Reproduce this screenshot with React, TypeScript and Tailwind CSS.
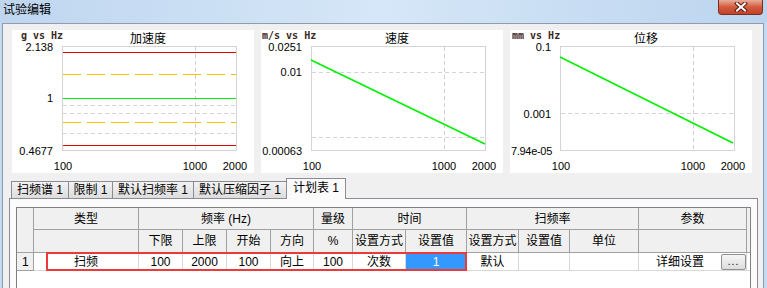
import React from "react";

type HLine = { y: number; color: string; dash?: string };

interface ChartProps {
  unit: string;
  unitX: number;
  title: string;
  yLabels: { t: string; y: number }[];
  lines: HLine[];
  slope?: [number, number, number, number];
}

function Chart({ unit, unitX, title, yLabels, lines, slope }: ChartProps) {
  return (
    <div className="w-[242px] h-[143px] bg-white">
      <svg width="242" height="143" className="block">
        <text x={unitX} y={9} fontFamily="DejaVu Sans Mono" fontWeight="bold" fontSize="10" fill="#3b2a1e">
          {unit}
        </text>
        <text x={136} y={13} textAnchor="middle" fontFamily="Noto Sans CJK SC" fontSize="12" fill="#000">
          {title}
        </text>
        <rect x="50.5" y="16.5" width="174" height="104" fill="none" stroke="#d4d4d4" shapeRendering="crispEdges" />
        <line x1="183.5" y1="17" x2="183.5" y2="120" stroke="#d0d0d0" strokeDasharray="4 3" shapeRendering="crispEdges" />
        {lines.map((l, i) => (
          <line
            key={i}
            x1="51"
            x2="224"
            y1={l.y + 0.5}
            y2={l.y + 0.5}
            stroke={l.color}
            strokeDasharray={l.dash}
            shapeRendering="crispEdges"
          />
        ))}
        {slope && (
          <line x1={slope[0]} y1={slope[1]} x2={slope[2]} y2={slope[3]} stroke="#00f000" strokeWidth="1.6" />
        )}
        {yLabels.map((l) => (
          <text
            key={l.t}
            x={l.t.length > 7 ? 42 : 41}
            y={l.y}
            textAnchor="end"
            fontFamily="Liberation Sans"
            fontSize="11"
            letterSpacing={l.t.length > 7 ? "-0.3" : "0"}
            fill="#000"
          >
            {l.t}
          </text>
        ))}
        <text x={51} y={140} textAnchor="middle" fontFamily="Liberation Sans" fontSize="11" fill="#000">100</text>
        <text x={183} y={140} textAnchor="middle" fontFamily="Liberation Sans" fontSize="11" fill="#000">1000</text>
        <text x={223} y={140} textAnchor="middle" fontFamily="Liberation Sans" fontSize="11" fill="#000">2000</text>
      </svg>
    </div>
  );
}

const tabs = [
  { label: "扫频谱 1", w: "w-[58px]" },
  { label: "限制 1", w: "w-[45px]" },
  { label: "默认扫频率 1", w: "w-[82px]" },
  { label: "默认压缩因子 1", w: "w-[94px]" },
];

const hd = "bg-[#f0f0f0] border-r border-b border-[#a0a0a0] flex items-center justify-center";
const td = "bg-white border-r border-b border-[#d8d8d8] flex items-center justify-center";

export default function App() {
  return (
    <div className="w-[767px] h-[288px] overflow-hidden bg-[#c4daf2] flex flex-col font-['Liberation_Sans','Noto_Sans_CJK_SC',sans-serif] text-[12px] text-black">
      {/* title bar */}
      <div className="h-[23px] shrink-0 flex items-start justify-between bg-linear-to-r from-[#bfd6ef] via-[#d5e7f8] to-[#bcd4ee]">
        <span className="pl-[3px] pt-[4px] leading-[12px] text-[12px]">试验编辑</span>
        <div className="mr-[4px] w-[45px] h-[15px] rounded-b-[4px] border border-t-0 border-[#7a2e20] bg-linear-to-b from-[#e9ab9b] via-[#d25a3c] to-[#c24329] flex items-center justify-center">
          <svg width="14" height="10" viewBox="0 0 14 10">
            <path d="M3 1.5 L11 8.5 M11 1.5 L3 8.5" stroke="#5a1c12" strokeWidth="4" strokeLinecap="square" />
            <path d="M3 1.5 L11 8.5 M11 1.5 L3 8.5" stroke="#fff" strokeWidth="2" strokeLinecap="square" />
          </svg>
        </div>
      </div>

      {/* body */}
      <div className="ml-[2px] w-[762px] flex-1 min-h-0 overflow-hidden border-l border-t border-r border-[#8d9cb0] bg-[#f0f0f0] pl-[6px] pr-[5px] pt-[6px]">
        <div className="ml-[3px] flex gap-[7px]">
          <Chart
            unit="g vs Hz"
            unitX={9}
            title="加速度"
            yLabels={[
              { t: "2.138", y: 21 },
              { t: "1", y: 72 },
              { t: "0.4677", y: 125 },
            ]}
            lines={[
              { y: 75, color: "#d4d4d4", dash: "4 3" },
              { y: 83, color: "#d4d4d4", dash: "4 3" },
              { y: 103, color: "#d4d4d4", dash: "4 3" },
              { y: 22, color: "#e00000" },
              { y: 115, color: "#e00000" },
              { y: 44, color: "#ffc000", dash: "18 6" },
              { y: 92, color: "#ffc000", dash: "18 6" },
              { y: 68, color: "#00f000" },
            ]}
          />
          <Chart
            unit="m/s vs Hz"
            unitX={1}
            title="速度"
            yLabels={[
              { t: "0.0251", y: 21 },
              { t: "0.01", y: 46 },
              { t: "0.00063", y: 125 },
            ]}
            lines={[
              { y: 42, color: "#d4d4d4", dash: "4 3" },
              { y: 107, color: "#d4d4d4", dash: "4 3" },
            ]}
            slope={[50, 30, 224, 114]}
          />
          <Chart
            unit="mm vs Hz"
            unitX={2}
            title="位移"
            yLabels={[
              { t: "0.1", y: 21 },
              { t: "0.001", y: 88 },
              { t: "7.94e-05", y: 125 },
            ]}
            lines={[{ y: 83, color: "#d4d4d4", dash: "4 3" }]}
            slope={[50, 27, 223, 113]}
          />
        </div>

        {/* tabs */}
        <div className="mt-[5px] h-[20px] flex items-end pl-[2px]">
          {tabs.map((t, i) => (
            <div
              key={t.label}
              className={`${t.w} ${i > 0 ? "-ml-px" : ""} h-[17px] border border-b-0 border-[#898c95] bg-linear-to-b from-[#f3f3f3] to-[#dddddd] flex items-center justify-center leading-[12px]`}
            >
              {t.label}
            </div>
          ))}
          <div className="relative z-10 -ml-px -mb-px w-[60px] h-[21px] border border-b-0 border-[#898c95] bg-[#fbfbfb] flex items-center justify-center leading-[12px] pb-[2px]">
            计划表 1
          </div>
        </div>

        {/* tab panel */}
        <div className="w-[749px] h-[120px] border border-[#898c95] bg-[#fbfbfb] pl-[6px] pt-[8px]">
          <div className="relative w-[735px] h-[100px] bg-white border-l border-t border-r border-[#808080]">
            <div className="grid grid-cols-[17px_105px_44px_44px_44px_43px_39px_53px_61px_52px_51px_69px_108px_3px] grid-rows-[22px_23px_18px] leading-[12px]">
              <div className={`${hd} row-span-2`} />
              <div className={hd}>类型</div>
              <div className={`${hd} col-span-4`}>频率 (Hz)</div>
              <div className={hd}>量级</div>
              <div className={`${hd} col-span-2`}>时间</div>
              <div className={`${hd} col-span-3`}>扫频率</div>
              <div className={hd}>参数</div>
              <div className="row-span-2 bg-[#f0f0f0] border-b border-[#a0a0a0]" />

              <div className={hd} />
              <div className={hd}>下限</div>
              <div className={hd}>上限</div>
              <div className={hd}>开始</div>
              <div className={hd}>方向</div>
              <div className={hd}>%</div>
              <div className={hd}>设置方式</div>
              <div className={hd}>设置值</div>
              <div className={hd}>设置方式</div>
              <div className={hd}>设置值</div>
              <div className={hd}>单位</div>
              <div className={hd} />

              <div className="bg-[#f0f0f0] border-r border-b border-[#a0a0a0] flex items-center pl-[5px]">1</div>
              <div className={td}>扫频</div>
              <div className={td}>100</div>
              <div className={td}>2000</div>
              <div className={td}>100</div>
              <div className={td}>向上</div>
              <div className={td}>100</div>
              <div className={td}>次数</div>
              <div className="bg-[#3399ff] text-white border-r border-b border-[#d8d8d8] flex items-center justify-center">1</div>
              <div className={td}>默认</div>
              <div className={td} />
              <div className={td} />
              <div className="bg-white border-r border-b border-[#d8d8d8] flex items-start">
                <span className="flex-1 text-center self-center">详细设置</span>
                <div className="mt-[1px] w-[25px] h-[16px] border border-[#8e8f8f] rounded-[2px] bg-linear-to-b from-[#f6f6f6] to-[#dcdcdc] flex items-end justify-center text-[10px] leading-[10px] tracking-[1px] pb-[2px]">
                  ...
                </div>
              </div>
              <div className="bg-white border-b border-[#d8d8d8]" />
            </div>
            <div className="absolute left-[29px] top-[44px] w-[421px] h-[19px] border-2 border-[#ec3a3a] pointer-events-none" />
          </div>
        </div>
      </div>
    </div>
  );
}
